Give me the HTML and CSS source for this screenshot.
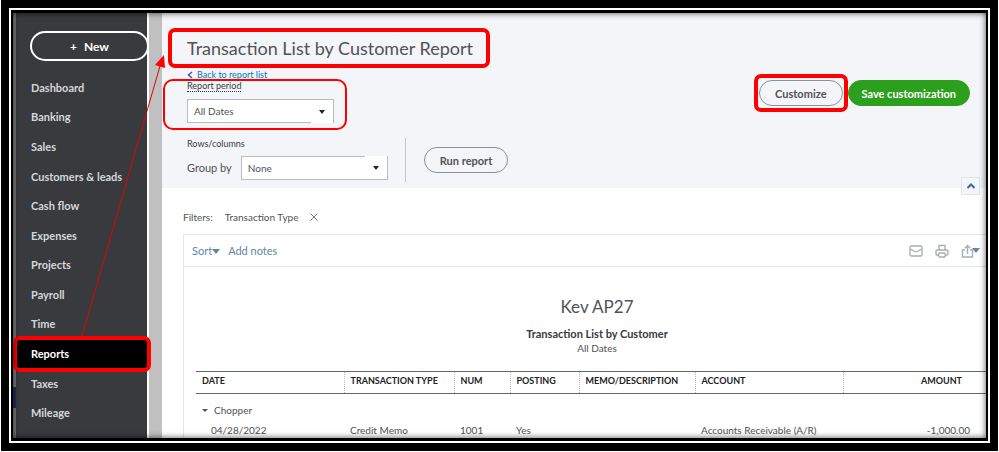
FILE: index.html
```
<!DOCTYPE html>
<html lang="en">
<head>
    <meta charset="UTF-8">
    <meta name="viewport" content="width=device-width, initial-scale=1.0">
    <title>Transaction List by Customer Report</title>
    <link rel="stylesheet" href="styles.css">
</head>
<body>
    <div class="frame">
        <div class="screen">
            <div class="edge"></div>
            <aside class="sidebar">
                <button class="new-btn" type="button"><span>+</span> New</button>
                <nav class="nav">
                    <a href="#">Dashboard</a>
                    <a href="#">Banking</a>
                    <a href="#">Sales</a>
                    <a href="#">Customers &amp; leads</a>
                    <a href="#">Cash flow</a>
                    <a href="#">Expenses</a>
                    <a href="#">Projects</a>
                    <a href="#">Payroll</a>
                    <a href="#">Time</a>
                    <a href="#" class="active">Reports</a>
                    <a href="#">Taxes</a>
                    <a href="#">Mileage</a>
                </nav>
            </aside>

            <main class="main">
                <header class="report-header">
                    <div class="header-left">
                        <h1>Transaction List by Customer Report</h1>
                        <a class="back" href="#">
                            <svg width="6" height="8" viewBox="0 0 6 8"><path d="M5 1 1.5 4 5 7" fill="none" stroke="#2c5fc0" stroke-width="1.5"/></svg>
                            Back to report list
                        </a>
                        <div class="period">
                            <label for="period">Report period</label>
                            <div class="select">
                                <select id="period"><option>All Dates</option></select>
                                <span class="caret caret-bottom"></span>
                            </div>
                        </div>
                        <div class="options">
                            <div class="rows">
                                <div class="small-label">Rows/columns</div>
                                <div class="group">
                                    <label for="group">Group by</label>
                                    <div class="select">
                                        <select id="group"><option>None</option></select>
                                        <span class="caret caret-top"></span>
                                    </div>
                                </div>
                            </div>
                            <button class="pill" type="button">Run report</button>
                        </div>
                    </div>
                    <div class="header-actions">
                        <button class="pill customize" type="button">Customize</button>
                        <button class="pill save" type="button">Save customization</button>
                    </div>
                    <button class="collapse" type="button" aria-label="Collapse">
                        <svg width="10" height="6" viewBox="0 0 10 6"><path d="M1.5 5 5 1.5 8.5 5" fill="none" stroke="#3c62b0" stroke-width="2"/></svg>
                    </button>
                </header>

                <div class="filters">
                    <span>Filters:</span>
                    <span>Transaction Type</span>
                    <button type="button" aria-label="Remove filter">
                        <svg width="8" height="8" viewBox="0 0 8 8"><path d="M.5.5 7.5 7.5M7.5.5.5 7.5" stroke="#777" fill="none"/></svg>
                    </button>
                </div>

                <section class="report">
                    <div class="toolbar">
                        <a href="#">Sort<i class="triangle"></i></a>
                        <a href="#">Add notes</a>
                        <div class="tools">
                            <button type="button" aria-label="Email">
                                <svg width="14" height="14" viewBox="0 0 14 14"><rect x="1" y="2" width="12" height="10" rx="1.5"/><path d="M1.5 5 5.5 7.5Q7 8.3 8.5 7.5L12.5 5"/></svg>
                            </button>
                            <button type="button" aria-label="Print">
                                <svg width="14" height="14" viewBox="0 0 14 14"><path d="M4 6V1.5h6V6M3.5 11H2.2Q1 11 1 9.8V7.2Q1 6 2.200 6h9.600Q13 6 13 7.200v2.600Q13 11 11.800 11h-1.300"/><rect x="3.700" y="9" width="6.600" height="4" rx="1"/></svg>
                            </button>
                            <button type="button" aria-label="Export" class="export">
                                <svg width="14" height="14" viewBox="0 0 14 14"><path d="M4 6H1.5v7h10V6H9M6.5 10V1.5M3.8 4.200 6.5 1.5 9.200 4.200"/></svg>
                                <i class="triangle"></i>
                            </button>
                        </div>
                    </div>
                    <div class="report-title">
                        <h2>Kev AP27</h2>
                        <h3>Transaction List by Customer</h3>
                        <p>All Dates</p>
                    </div>
                    <table>
                        <colgroup>
                            <col class="col-date"><col class="col-type"><col class="col-num"><col class="col-posting"><col class="col-memo"><col class="col-account"><col>
                        </colgroup>
                        <thead>
                            <tr>
                                <th>DATE</th>
                                <th>TRANSACTION TYPE</th>
                                <th>NUM</th>
                                <th>POSTING</th>
                                <th>MEMO/DESCRIPTION</th>
                                <th>ACCOUNT</th>
                                <th class="amount">AMOUNT</th>
                            </tr>
                        </thead>
                        <tbody>
                            <tr class="customer">
                                <td colspan="7"><i class="triangle"></i>Chopper</td>
                            </tr>
                            <tr>
                                <td class="date">04/28/2022</td>
                                <td>Credit Memo</td>
                                <td>1001</td>
                                <td>Yes</td>
                                <td></td>
                                <td>Accounts Receivable (A/R)</td>
                                <td class="amount">-1,000.00</td>
                            </tr>
                        </tbody>
                    </table>
                </section>
            </main>

            <!-- arrow from Reports to the page title -->
            <svg class="arrow" width="90" height="300" viewBox="0 0 90 300">
                <path d="M5 284 83 14" stroke="#e60000" fill="none"/>
                <path d="M87 3 78 13 88 16z" fill="#f00"/>
            </svg>
        </div>
    </div>
</body>
</html>
```

FILE: styles.css
```
* {
    box-sizing: border-box;
}

body {
    margin: 0;
    padding: 0 1px 1px;
    height: 100vh;
    background: #fff;
    color: #505257;
    font-family: Lato, "Liberation Sans", sans-serif;
    font-size: 11px;
    line-height: 14px;
}

h1, h2, h3, p {
    margin: 0;
}

a {
    text-decoration: none;
}

button, select {
    font-family: inherit;
    font-size: 11px;
    color: inherit;
}

button {
    padding: 0;
    border: 0;
    background: none;
}

svg {
    display: block;
}

/* black and white picture frame */
.frame {
    height: 100%;
    border: 8px solid #000;
    border-width: 8px 7px;
    background: #000;
    outline: 2px solid #fff;
    outline-offset: -10px;
    padding: 5px;
}

.screen {
    position: relative;
    display: flex;
    height: 100%;
    overflow: hidden;
    background: #fff;
}

.screen::after {
    content: "";
    position: absolute;
    inset: 0;
    box-shadow: inset 0 0 6px rgba(0, 0, 0, 0.7);
    pointer-events: none;
}

.edge {
    width: 3px;
    background: linear-gradient(#77797a 88%, #1c2f57 88%, #1c2f57 93%, #77797a 93%);
}

/* sidebar */
.sidebar {
    display: flex;
    flex-direction: column;
    width: 133px;
    padding: 18px 0 10px;
    background: #393a3d;
    border-right: 2px solid #fff;
}

.new-btn {
    height: 30px;
    margin: 0 -2px 12px 14px;
    border: 2px solid #fff;
    border-radius: 15px;
    color: #fff;
    font-size: 12px;
    font-weight: 700;
}

.new-btn span {
    margin-right: 4px;
}

.nav {
    flex: 1;
    display: grid;
    grid-auto-rows: 1fr;
}

.nav a {
    position: relative;
    display: flex;
    align-items: center;
    padding-left: 15px;
    color: #d4d7dc;
    font-weight: 700;
}

.nav .active {
    background: #000;
    color: #fff;
}

/* red callouts */
.nav .active::after,
h1::after,
.period::after,
.customize::after {
    content: "";
    position: absolute;
    border: 4px solid #f00;
    border-radius: 7px;
}

.nav .active::after {
    inset: -3px -4px -3px -3px;
}

h1::after {
    inset: 0 -17px 0 -19px;
}

.period::after {
    inset: -2px -13px -7px -24px;
    border-width: 2px;
    border-radius: 10px;
}

.customize::after {
    inset: -7px -6px;
}

.arrow {
    position: absolute;
    left: 64px;
    top: 39px;
}

/* report header */
.main {
    flex: 1;
    min-width: 0;
    border-left: 13px solid #c0c0c0;
}

.report-header {
    position: relative;
    display: flex;
    justify-content: space-between;
    height: 175px;
    padding: 15px 16px 0 25px;
    background: #f4f5f8;
}

.header-left {
    display: flex;
    flex-direction: column;
    align-items: flex-start;
}

h1 {
    position: relative;
    font-size: 18px;
    font-weight: 400;
    line-height: 40px;
}

.back {
    display: flex;
    align-items: center;
    gap: 4px;
    margin-top: 1px;
    color: #0077c5;
    font-size: 9px;
    line-height: 12px;
}

.period {
    position: relative;
}

.period label,
.small-label {
    display: block;
    width: fit-content;
    color: #393a3d;
    font-size: 9px;
    line-height: 10px;
}

.period label {
    margin-bottom: 7px;
    border-bottom: 1px dotted #393a3d;
}

.select {
    position: relative;
    width: 147px;
}

select {
    display: block;
    width: 100%;
    height: 24px;
    padding: 0 6px;
    border: 1px solid #b8bcc4;
    border-radius: 0;
    background: #fff;
    font-size: 10px;
    appearance: none;
}

/* the caret block covers part of the border */
.caret {
    position: absolute;
    right: 1px;
    display: grid;
    place-items: center;
    width: 22px;
    height: 23px;
    background: #fff;
    pointer-events: none;
}

.caret-top { top: 0; }
.caret-bottom { bottom: 0; }

.caret::after {
    content: "";
    border: 3px solid transparent;
    border-top: 4px solid #222;
    border-bottom: 0;
}

.options {
    display: flex;
    align-items: center;
    margin-top: 15px;
}

.rows {
    height: 44px;
    padding: 1px 17px 0 0;
    border-right: 1px solid #c2c5ca;
    margin-right: 18px;
}

.group {
    display: flex;
    align-items: center;
    gap: 9px;
    margin-top: 7px;
}

.pill {
    height: 26px;
    padding: 0 15px;
    border: 1px solid #8d9096;
    border-radius: 13px;
    font-weight: 700;
}

.header-actions {
    display: flex;
    align-items: flex-start;
    gap: 5px;
    padding-top: 52px;
}

.customize {
    position: relative;
}

.save {
    padding: 0 13px;
    border-color: #2ca01c;
    background: #2ca01c;
    color: #fff;
}

.collapse {
    position: absolute;
    right: 6px;
    bottom: -7px;
    display: grid;
    place-items: center;
    width: 19px;
    height: 18px;
    border: 1px solid #dfe5ef;
    background: #f4f5f8;
}

/* report */
.filters {
    display: flex;
    align-items: center;
    gap: 12px;
    padding: 22px 21px 10px;
    font-size: 10px;
}

.report {
    margin: 0 -25px 0 21px;
    border: 1px solid #dfe7f1;
}

.toolbar {
    display: flex;
    align-items: center;
    gap: 8px;
    height: 32px;
    padding: 0 30px 0 8px;
    border-bottom: 1px solid #dfe7f1;
}

.toolbar a {
    color: #6285ab;
}

.triangle {
    display: inline-block;
    border: 4px solid transparent;
    border-top: 5px solid #5f86ab;
    border-bottom: 0;
    vertical-align: 1px;
}

.tools {
    display: flex;
    gap: 12px;
    margin-left: auto;
}

.tools svg {
    fill: none;
    stroke: #a9adb5;
    stroke-width: 1.4;
}

.export {
    display: flex;
    align-items: center;
}

.export .triangle {
    margin-left: -3px;
}

.report-title {
    padding: 28px 0 16px;
    text-align: center;
    font-size: 10px;
}

h2 {
    margin-bottom: 8px;
    font-size: 17px;
    font-weight: 400;
    line-height: 24px;
}

h3 {
    font-size: 11px;
    color: #393a3d;
}

table {
    width: calc(100% - 12px);
    margin-left: 12px;
    border-collapse: collapse;
    table-layout: fixed;
    font-size: 10px;
}

.col-date { width: 148px; }
.col-type { width: 110px; }
.col-num { width: 56px; }
.col-posting { width: 69px; }
.col-memo { width: 116px; }
.col-account { width: 148px; }

th {
    height: 22px;
    padding: 0 6px 3px;
    border-top: 1px solid #666;
    border-bottom: 1px solid #666;
    border-left: 1px dotted #bbb;
    color: #222;
    font-size: 9px;
    text-align: left;
    white-space: nowrap;
}

th:first-child {
    border-left: 0;
}

td {
    height: 20px;
    padding: 0 6px;
    white-space: nowrap;
}

.customer td {
    padding-top: 6px;
    height: 26px;
}

.customer .triangle {
    margin-right: 6px;
    border-width: 3px 3px 0;
    border-top-color: #555;
    vertical-align: 2px;
}

.date {
    padding-left: 15px;
}

th.amount {
    padding-right: 48px;
    text-align: right;
}

td.amount {
    padding-right: 40px;
    text-align: right;
}
```
